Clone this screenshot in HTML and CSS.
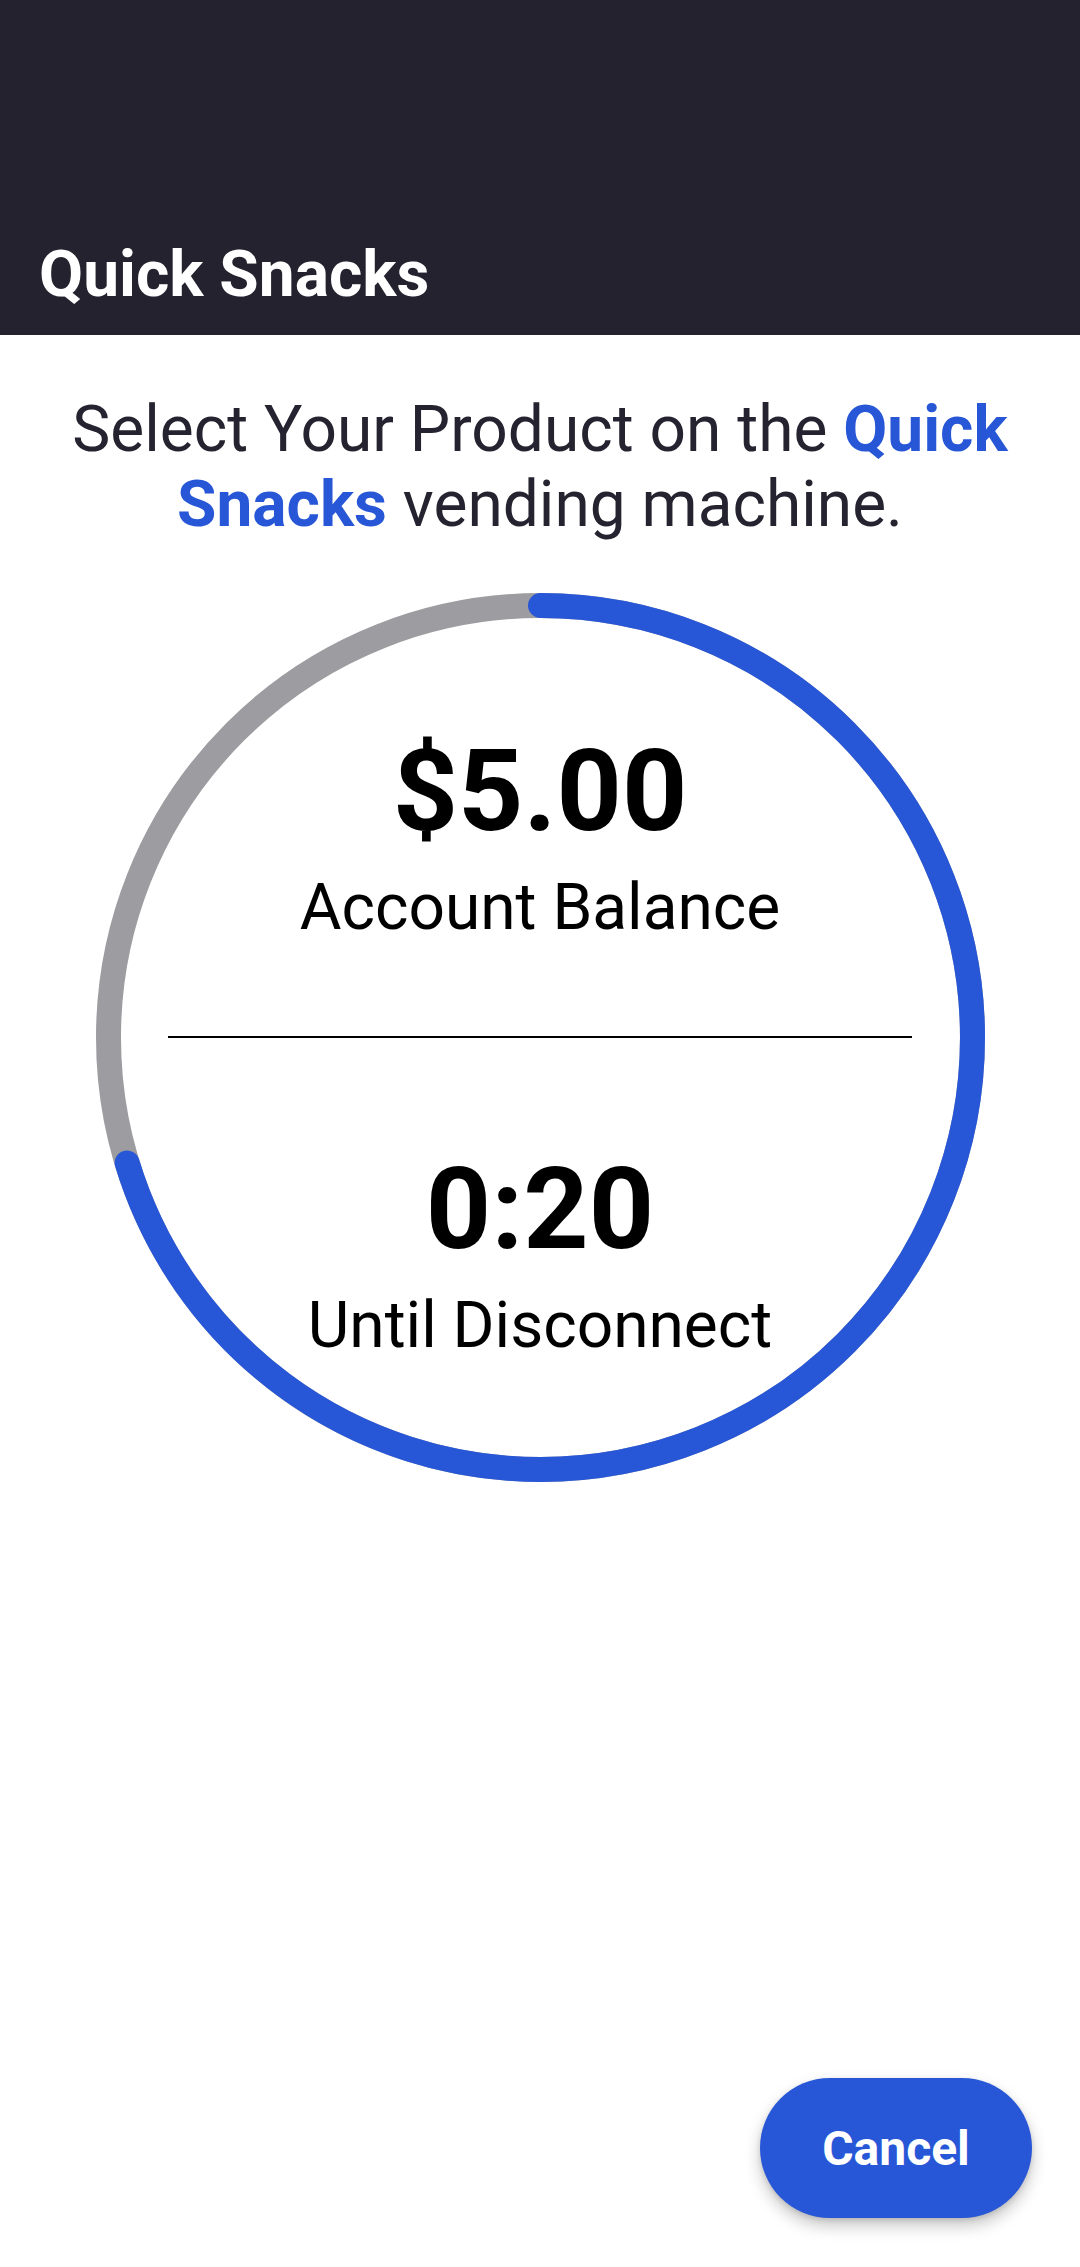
FILE: index.html
```html
<!DOCTYPE html>
<html lang="en">
<head>
<meta charset="utf-8">
<title>Quick Snacks</title>
<link rel="stylesheet" href="styles.css">
</head>
<body>
<div class="page">
  <header class="appbar">
    <h1 class="appbar-title">Quick Snacks</h1>
  </header>
  <main class="content">
    <p class="prompt">Select Your Product on the <strong class="brand">Quick Snacks</strong> vending machine.</p>
    <div class="dial">
      <svg class="ring" viewBox="0 0 889 889" aria-hidden="true">
        <circle class="ring-track" cx="444.5" cy="444.5" r="432"></circle>
        <circle class="ring-progress" cx="444.5" cy="444.5" r="432" stroke-dasharray="1908 2714.3" transform="rotate(-90 444.5 444.5)"></circle>
      </svg>
      <div class="dial-value">$5.00</div>
      <div class="dial-label">Account Balance</div>
      <div class="dial-divider"></div>
      <div class="dial-value">0:20</div>
      <div class="dial-label">Until Disconnect</div>
    </div>
  </main>
  <button class="fab" type="button">Cancel</button>
</div>
</body>
</html>
```
FILE: styles.css
```css
html, body {
  margin: 0;
  padding: 0;
  background: #ffffff;
}

body {
  font-family: Roboto, "Noto Sans", "Liberation Sans", sans-serif;
}

.page {
  min-height: 2267px;
  display: flex;
  flex-direction: column;
}

.appbar {
  height: 335px;
  box-sizing: border-box;
  background: #23222e;
  display: flex;
  flex-direction: column;
  justify-content: flex-end;
  padding: 0 39px 23px;
}

.appbar-title {
  margin: 0;
  color: #ffffff;
  font-size: 64px;
  font-weight: 700;
  line-height: 75px;
}

.content {
  display: flex;
  flex-direction: column;
  align-items: center;
}

.prompt {
  margin: 57px 0 0;
  padding: 0 50px;
  text-align: center;
  color: #24232f;
  font-size: 64px;
  line-height: 75px;
  font-weight: 400;
}

.brand {
  color: #2757d7;
  font-weight: 700;
}

.dial {
  position: relative;
  width: 889px;
  height: 889px;
  margin-top: 51px;
  box-sizing: border-box;
  padding-top: 131px;
  display: flex;
  flex-direction: column;
  align-items: center;
}

.ring {
  position: absolute;
  left: 0;
  top: 0;
  width: 889px;
  height: 889px;
}

.ring-track {
  fill: none;
  stroke: #9d9da1;
  stroke-width: 25;
}

.ring-progress {
  fill: none;
  stroke: #2757d7;
  stroke-width: 25;
  stroke-linecap: round;
}

.dial-value {
  position: relative;
  font-size: 114px;
  font-weight: 700;
  line-height: 134px;
  color: #000000;
}

.dial-label {
  position: relative;
  margin-top: 12px;
  font-size: 64px;
  font-weight: 400;
  line-height: 75px;
  color: #000000;
}

.dial-divider {
  position: relative;
  width: 744px;
  height: 2px;
  background: #000000;
  margin: 91px 0 104px;
}

.fab {
  margin-top: auto;
  align-self: flex-end;
  margin-right: 48px;
  margin-bottom: 49px;
  width: 272px;
  height: 140px;
  border: none;
  border-radius: 70px;
  background: #2757d7;
  color: #ffffff;
  font-family: Roboto, "Noto Sans", "Liberation Sans", sans-serif;
  font-size: 48px;
  font-weight: 700;
  box-shadow: 0 8px 16px rgba(0, 0, 0, 0.22), 0 2px 5px rgba(0, 0, 0, 0.12);
  padding: 0;
}
```
